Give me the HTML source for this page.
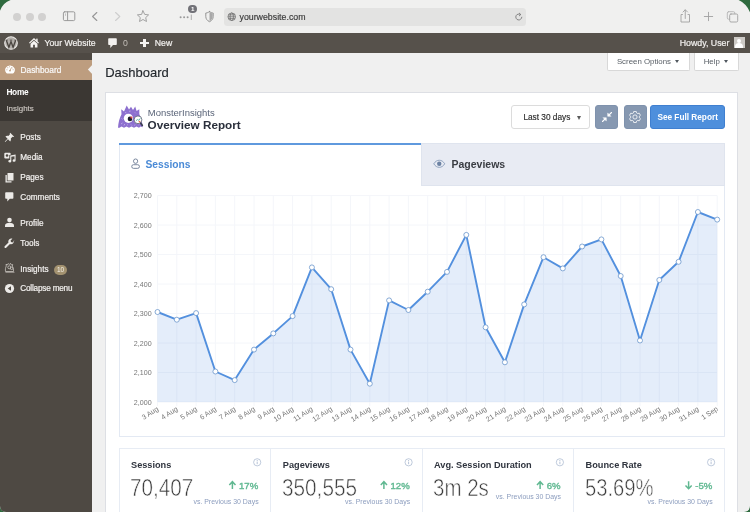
<!DOCTYPE html>
<html>
<head>
<meta charset="utf-8">
<title>Dashboard</title>
<style>
html,body{margin:0;padding:0;}
body{width:750px;height:512px;overflow:hidden;background:#2f6b3f;font-family:"Liberation Sans",sans-serif;position:relative;}
.abs{position:absolute;}
.t{position:absolute;white-space:nowrap;line-height:1;}
#adminbar .t{-webkit-text-stroke:0.2px #f2f0ee;}
#win{will-change:transform;position:absolute;left:0;top:0;width:750px;height:512px;overflow:hidden;border-radius:0 0 6px 6px;background:#f0f0f0;}
#chrome{position:absolute;left:0;top:0;width:750px;height:33px;background:#f0f0ef;}
#adminbar{position:absolute;left:0;top:33px;width:750px;height:20px;background:#56514b;}
#side{position:absolute;left:0;top:53px;width:92.4px;height:459px;background:#4e4943;}
#side .act{position:absolute;left:0;top:7px;width:92.4px;height:19.7px;background:#bd9d7f;}
#side .sub{position:absolute;left:0;top:26.7px;width:92.4px;height:41.2px;background:#3b3733;}
.m{position:absolute;left:20.3px;color:#f2f0ee;font-size:8.2px;line-height:10px;white-space:nowrap;-webkit-text-stroke:0.2px #f2f0ee;}
.ax{font-family:"Liberation Sans",sans-serif;font-size:7.1px;fill:#777;}
#card{position:absolute;left:105px;top:92px;width:633px;height:430px;background:#fff;border:1px solid #dddfe4;box-sizing:border-box;}
.btn{position:absolute;box-sizing:border-box;border-radius:2px;}
.stat{position:absolute;top:448px;height:70px;box-sizing:border-box;border:1px solid #e7ecf4;background:#fff;}
.sl{position:absolute;top:459.9px;font-size:9.2px;font-weight:700;color:#30353f;line-height:10px;white-space:nowrap;}
.sv{position:absolute;top:475.7px;font-size:23px;color:#3c3c3c;line-height:24px;white-space:nowrap;-webkit-text-stroke:0.55px #fff;transform-origin:0 0;}
.sp{position:absolute;top:479.9px;font-size:9.6px;font-weight:400;-webkit-text-stroke:0.4px #64ba94;color:#64ba94;line-height:11px;white-space:nowrap;text-align:right;}
.sd{position:absolute;top:498px;font-size:6.95px;color:#8c9dbe;line-height:8px;white-space:nowrap;text-align:right;}
</style>
</head>
<body>
<div id="win">

<!-- ===== browser chrome ===== -->
<div id="chrome">
  <div class="abs" style="left:13px;top:12.5px;width:8px;height:8px;border-radius:50%;background:#d2d1d0"></div>
  <div class="abs" style="left:25.5px;top:12.5px;width:8px;height:8px;border-radius:50%;background:#d2d1d0"></div>
  <div class="abs" style="left:38px;top:12.5px;width:8px;height:8px;border-radius:50%;background:#d2d1d0"></div>
  <svg class="abs" style="left:0;top:0" width="750" height="33" viewBox="0 0 750 33" fill="none" stroke="#8a8a8a" stroke-width="1" stroke-linecap="round" stroke-linejoin="round">
    <!-- sidebar icon -->
    <rect x="63.4" y="11.8" width="11.4" height="8.8" rx="1.3" stroke="#9a9a9a"/>
    <path d="M67.6 11.8V20.6" stroke="#9a9a9a"/><path d="M65.5 13.8v1.6" stroke="#b0b0b0" stroke-width="0.7"/>
    <!-- back -->
    <path d="M96.8 12.5L92.6 16.5L96.8 20.5" stroke="#969696" stroke-width="1.1"/>
    <!-- forward -->
    <path d="M115.6 12.5L119.8 16.5L115.6 20.5" stroke="#cdcdcd" stroke-width="1.1"/>
    <!-- star -->
    <path d="M143 10.8l1.7 3.6 3.9.5-2.9 2.7.8 3.9-3.5-2-3.5 2 .8-3.9-2.9-2.7 3.9-.5z" stroke="#9a9a9a" stroke-width="0.9"/>
    <!-- extension dots -->
    <circle cx="180.6" cy="17.3" r="1" fill="#9a9a9a" stroke="none"/>
    <circle cx="184.1" cy="17.3" r="1" fill="#9a9a9a" stroke="none"/>
    <circle cx="187.6" cy="17.3" r="1" fill="#9a9a9a" stroke="none"/>
    <path d="M191.3 15v4.6" stroke="#a5a5a5" stroke-width="0.9"/>
    <!-- shield -->
    <g transform="translate(1 0.3)"><path d="M208.5 11.3c1.2.9 2.4 1.3 3.7 1.4v3.6c0 2.300-1.500 4.100-3.700 5.100c-2.200-1-3.700-2.800-3.700-5.100v-3.600c1.300-.1 2.500-.5 3.700-1.400z" stroke-width="0.9"/>
    <path d="M208.500 11.800c1.100.8 2.200 1.200 3.200 1.300v3.200c0 2-1.300 3.600-3.200 4.500z" fill="#a8a8a8" stroke="none"/></g>
    <!-- share -->
    <path d="M682.500 14.500h-1.500v7.500h8.500v-7.500h-1.500M685.250 18.500v-8.500M683 12l2.250-2.250 2.250 2.250" stroke="#a0a0a0" stroke-width="0.9"/>
    <!-- plus -->
    <path d="M704.300 16.500h8.400M708.500 12.300v8.400" stroke="#a0a0a0" stroke-width="0.9"/>
    <!-- tabs -->
    <rect x="727.300" y="11.700" width="7.500" height="7.500" rx="1.300" stroke="#b5b5b5" stroke-width="0.9"/>
    <rect x="729.700" y="14" width="8" height="8" rx="1.300" fill="#f0f0ef" stroke="#a0a0a0" stroke-width="0.9"/>
  </svg>
  <!-- badge -->
  <div class="abs" style="left:188.4px;top:4.7px;width:8.6px;height:8.6px;border-radius:50%;background:#727278"></div>
  <div class="t" style="left:188.4px;top:6px;width:8.6px;text-align:center;font-size:6.2px;font-weight:700;color:#fff">1</div>
  <!-- url bar -->
  <div class="abs" style="left:223.5px;top:8px;width:302.5px;height:17.800px;border-radius:3.500px;background:#e3e3e2"></div>
  <svg class="abs" style="left:226.8px;top:11.8px" width="9.5" height="9.5" viewBox="0 0 9 9" fill="none" stroke="#6a6a6a" stroke-width="0.700">
    <circle cx="4.500" cy="4.500" r="3.600"/><ellipse cx="4.500" cy="4.500" rx="1.600" ry="3.600"/><path d="M1 4.500h7M1.500 2.700h6M1.500 6.300h6"/>
  </svg>
  <div class="t" style="left:239.500px;top:12px;font-size:8.800px;color:#383838;line-height:10px;-webkit-text-stroke:0.15px #383838">yourwebsite.com</div>
  <svg class="abs" style="left:513.800px;top:12.100px" width="10" height="10" viewBox="0 0 10 10" fill="none" stroke="#7a7a7a" stroke-width="0.900" stroke-linecap="round">
    <path d="M7.800 5.200a3 3 0 1 1-1.300-2.700"/><path d="M5.300 1.200l1.500 1.300-1.500 1.300" stroke-linejoin="round"/>
  </svg>
</div>

<!-- ===== WP admin bar ===== -->
<div id="adminbar">
  <svg class="abs" style="left:4px;top:2.6px" width="14" height="14" viewBox="0 0 14 14">
    <circle cx="7" cy="7" r="6.3" fill="#b3afaa" stroke="#ebe9e6" stroke-width="1.1"/>
    <path d="M2.300 4.300L4.900 11.300L7.000 5.600L9.100 11.300L11.700 4.300" fill="none" stroke="#4a4540" stroke-width="1.300" stroke-linejoin="miter"/>
    <path d="M1.500 4.100h2.400M5.800 4.100h2.400M10.300 4.100h2.000" stroke="#4a4540" stroke-width="0.700"/>
  </svg>
  <svg class="abs" style="left:29.300px;top:4.800px" width="10" height="10.200" viewBox="0 0 11 11" preserveAspectRatio="none" fill="#f6f4f2">
    <path d="M5.500 0.100L0 5L0.900 6L5.500 1.900L10.100 6L11 5Z"/><rect x="7.900" y="0.700" width="1.600" height="3"/>
    <path d="M5.500 2.900L1.700 6.300V10.300H4.500V7.400H6.500V10.300H9.300V6.300Z"/>
  </svg>
  <div class="t" style="left:44.500px;top:5px;font-size:8.700px;color:#f2f0ee;line-height:10px">Your Website</div>
  <svg class="abs" style="left:107.5px;top:5px" width="9" height="10.5" viewBox="0 0 9 10.5" fill="#f3f1ef">
    <path d="M1 0.200h7a.800.800 0 0 1 .8.800v5.300a.800.800 0 0 1-.8.800h-3l-2.700 3v-3h-1.300a.800.800 0 0 1-.8-.800v-5.300a.800.800 0 0 1 .8-.800z"/>
  </svg>
  <div class="t" style="left:123px;top:5px;font-size:8.700px;color:#c4bfb9;line-height:10px;-webkit-text-stroke:0">0</div>
  <div class="abs" style="left:140px;top:8.700px;width:9px;height:2.200px;background:#f5f3f1"></div>
  <div class="abs" style="left:143.400px;top:5.500px;width:2.200px;height:8.600px;background:#f5f3f1"></div>
  <div class="t" style="left:154.800px;top:5px;font-size:8.700px;color:#f2f0ee;line-height:10px">New</div>
  <div class="t" style="right:20.600px;top:5px;font-size:8.800px;color:#f2f0ee;line-height:10px">Howdy, User</div>
  <div class="abs" style="left:733.800px;top:4px;width:11.200px;height:11px;background:#cdcac6;overflow:hidden">
    <div class="abs" style="left:3.200px;top:1.500px;width:4px;height:4px;border-radius:50%;background:#fff"></div>
    <div class="abs" style="left:1.200px;top:6px;width:8px;height:7px;border-radius:4px 4px 0 0;background:#fff"></div>
  </div>
</div>

<!-- ===== sidebar ===== -->
<div id="side">
  <div class="act"></div>
  <svg class="abs" style="left:86px;top:10px" width="7" height="13" viewBox="0 0 7 13"><path d="M6.400 1.700L1.900 6.500L6.400 11.300Z" fill="#f0f0f0"/></svg>
  <div class="sub"></div>
  <!-- dashboard icon -->
  <svg class="abs" style="left:4.5px;top:12.2px" width="10" height="9" viewBox="0 0 10 9">
    <path d="M5 0.400a4.600 4.600 0 0 0-3.700 7.600c.2.300.5.400.8.400h5.800c.3 0 .6-.1.800-.4a4.600 4.600 0 0 0-3.700-7.600z" fill="#fff"/>
    <circle cx="5" cy="5.600" r="0.900" fill="#bd9d7f"/><path d="M5 5.600l1.600-3.300" stroke="#bd9d7f" stroke-width="0.800"/>
    <circle cx="1.900" cy="4.800" r="0.550" fill="#bd9d7f"/><circle cx="2.800" cy="2.700" r="0.550" fill="#bd9d7f"/><circle cx="4.600" cy="1.700" r="0.500" fill="#bd9d7f"/><circle cx="8.100" cy="4.800" r="0.550" fill="#bd9d7f"/><circle cx="7.600" cy="2.900" r="0.450" fill="#bd9d7f"/>
  </svg>
  <div class="m" style="left:20.5px;top:12.2px;font-size:8.35px;color:#fff">Dashboard</div>
  <div class="m" style="left:6.400px;top:34.100px;font-weight:700;font-size:8.300px;letter-spacing:-0.27px;color:#fff;-webkit-text-stroke:0">Home</div>
  <div class="m" style="left:6.400px;top:50.500px;font-size:7.950px;color:#cbc6c0;-webkit-text-stroke:0.15px #cbc6c0">Insights</div>

  <!-- Posts (pin) -->
  <svg class="abs" style="left:3.5px;top:78.8px" width="11" height="11" viewBox="0 0 11 11" fill="#eceae7">
    <path d="M6.200 0.800l4 4-.900.300-.800-.300-1.700 1.700c.300 1.100.100 2.100-.600 2.900l-2.200-2.200-2.800 2.800-.400-.400 2.800-2.800-2.200-2.200c.800-.700 1.800-.900 2.900-.600l1.700-1.700-.300-.800z"/>
  </svg>
  <div class="m" style="top:80.1px">Posts</div>
  <!-- Media -->
  <svg class="abs" style="left:3.5px;top:98.7px" width="12" height="11" viewBox="0 0 12 11" fill="#eceae7">
    <path d="M1.300 0.800h4.400a1 1 0 0 1 1 1v0.900l-1.400 0.300v3.600h-4a1 1 0 0 1-1-1v-3.800a1 1 0 0 1 1-1z"/><circle cx="3" cy="3.600" r="1.250" fill="#4e4943"/>
    <path d="M6.200 3.600l5.400-1v6a1.500 1.250 0 1 1-1.100-1.200v-3.200l-3.200 0.600v4.400a1.500 1.250 0 1 1-1.100-1.200z"/>
  </svg>
  <div class="m" style="top:100.3px">Media</div>
  <!-- Pages -->
  <svg class="abs" style="left:4.2px;top:118.6px" width="11" height="11" viewBox="0 0 11 11" fill="#eceae7">
    <path d="M3.500 1h6v7.500h-6z"/><path d="M1.500 3h1.300v6.200h4.700v1.300h-6z"/>
  </svg>
  <div class="m" style="top:120.3px">Pages</div>
  <!-- Comments -->
  <svg class="abs" style="left:5px;top:138.700px" width="8.600" height="10" viewBox="0 0 8.600 10" fill="#eceae7">
    <path d="M1 0.200h6.600a.800.800 0 0 1 .8.800v5a.800.800 0 0 1-.8.800h-2.800l-2.500 2.800v-2.800h-1.300a.800.800 0 0 1-.8-.8v-5a.800.800 0 0 1 .8-.8z"/>
  </svg>
  <div class="m" style="top:140px">Comments</div>
  <!-- Profile -->
  <svg class="abs" style="left:3.8px;top:164.3px" width="11" height="11" viewBox="0 0 11 11" fill="#eceae7">
    <circle cx="5.500" cy="3" r="2.300"/><path d="M1 10v-1.500c0-1.700 2-2.700 4.500-2.700s4.500 1 4.500 2.700v1.500z"/>
  </svg>
  <div class="m" style="top:165.9px">Profile</div>
  <!-- Tools -->
  <svg class="abs" style="left:4.1px;top:185.2px" width="11" height="11" viewBox="0 0 11 11" fill="#eceae7">
    <path d="M10.300 2.600l-1.800 1.800-1.500-.400-.400-1.500 1.800-1.800c-1.200-.400-2.500-.100-3.300.800-.800.800-1 2-.600 3l-3.800 3.800c-.400.400-.400 1.100 0 1.500s1.100.400 1.500 0l3.800-3.800c1 .4 2.200.200 3-.600.900-.900 1.200-2.200.800-3.300z"/>
  </svg>
  <div class="m" style="top:185.6px">Tools</div>
  <!-- Insights -->
  <svg class="abs" style="left:3.6px;top:208.3px" width="12" height="12" viewBox="0 0 12 12" fill="none" stroke="#d8d4cf" stroke-width="0.700">
    <path d="M1.500 10.500c-.300-2 0-4 .800-5.500l-.300-1.800 1.300.800 1-1.500 1 1 1.200-1.200.800 1.700 1.400-.500-.300 1.700c.900 1.500 1.300 3.300 1.100 5.300z"/>
    <circle cx="5.300" cy="6.300" r="1.500"/><circle cx="7.600" cy="7.300" r="1.300"/>
    <path d="M1.500 11.300h9" stroke-width="0.600"/>
  </svg>
  <div class="m" style="top:211.9px">Insights</div>
  <div class="abs" style="left:54.1px;top:211.700px;width:13px;height:10px;border-radius:5px;background:#a39270"></div>
  <div class="t" style="left:54.1px;top:213.600px;width:13px;text-align:center;font-size:6.500px;color:#f6f2ea">10</div>
  <!-- Collapse -->
  <svg class="abs" style="left:3.6px;top:229.8px" width="11" height="11" viewBox="0 0 11 11">
    <circle cx="5.500" cy="5.500" r="4.600" fill="#eceae7"/><path d="M7 3.200v4.600l-3.300-2.300z" fill="#4e4943"/>
  </svg>
  <div class="m" style="top:231.1px;letter-spacing:-0.2px">Collapse menu</div>
</div>

<!-- ===== content ===== -->
<div class="t" style="left:105.2px;top:66px;font-size:13px;color:#23282d;line-height:14px;-webkit-text-stroke:0.15px #23282d">Dashboard</div>

<div class="btn" style="left:607px;top:53px;width:83px;height:17.500px;background:#fff;border:1px solid #d8d8d8;border-top:none;border-radius:0 0 2px 2px"></div>
<div class="t" style="left:616.900px;top:58.100px;font-size:7.850px;color:#5a6067;line-height:8px">Screen Options</div>
<div class="abs" style="left:675.2px;top:59.900px;width:0;height:0;border-left:2.400px solid transparent;border-right:2.400px solid transparent;border-top:3.500px solid #50575e"></div>
<div class="btn" style="left:693.500px;top:53px;width:45px;height:17.500px;background:#fff;border:1px solid #d8d8d8;border-top:none;border-radius:0 0 2px 2px"></div>
<div class="t" style="left:703.700px;top:58.100px;font-size:7.850px;color:#5a6067;line-height:8px">Help</div>
<div class="abs" style="left:723.8px;top:59.900px;width:0;height:0;border-left:2.400px solid transparent;border-right:2.400px solid transparent;border-top:3.500px solid #50575e"></div>

<div id="card"></div>

<!-- logo -->
<svg class="abs" style="left:117px;top:104px" width="27" height="27" viewBox="0 0 27 27">
  <path d="M1 23.800C1.200 19 2.600 14 4.500 10.300L4.200 5.300L7 7.400L9.700 1.500L12 5.600L14 2.800L16 6L18.200 2.600L19.600 7L22.300 5.300L22.300 10C24.200 14 25.600 19 25.600 23.200L23.600 22.400L22 23.800L19.500 22.600L17 23.800L14.500 22.600L12 23.800L9.500 22.600L7 23.800L4.500 22.600L2.500 23.800Z" fill="#8d70cf"/>
  <path d="M4 20l1.500-1M7 21.500l.8-1.500M4.500 14.500l1 .800M14 20.500l1 1M8.500 8l.5 1.200M13 6.500l-.3 1.500M17.500 21.500l.5-1M18 8.500l.8.800M21.500 21l.8-.6M10 20.500l.8.500" stroke="#bfaee8" stroke-width="0.900" fill="none"/>
  <circle cx="11.400" cy="14.300" r="4.600" fill="#fff"/>
  <circle cx="13" cy="14.900" r="2.300" fill="#1d1d2b"/>
  <circle cx="14.400" cy="13.500" r="1.100" fill="#e24b4b"/>
  <circle cx="21" cy="15.800" r="3.900" fill="#fff" stroke="#6a7080" stroke-width="0.900"/>
  <path d="M23.800 19.200l1.500 2.200" stroke="#3c4050" stroke-width="1.700" stroke-linecap="round"/>
  <path d="M18.900 16.800l1.500-1.300 1.400.8 1.500-2" stroke="#58b6a0" stroke-width="0.900" fill="none"/>
  <circle cx="22.500" cy="17.600" r="0.900" fill="#e86a4a"/>
</svg>
<div class="t" style="left:147.800px;top:107.400px;font-size:9.480px;color:#5a6478;line-height:11px">MonsterInsights</div>
<div class="t" style="left:147.600px;top:118.300px;font-size:11.720px;font-weight:700;color:#2a2f3b;line-height:13px">Overview Report</div>

<!-- date dropdown -->
<div class="btn" style="left:511.3px;top:104.7px;width:79px;height:24.500px;background:#fff;border:1px solid #dcdcdc;border-radius:3px"></div>
<div class="t" style="left:523.400px;top:112.700px;font-size:8.290px;color:#2c2c2c;line-height:9px;-webkit-text-stroke:0.15px #2c2c2c">Last 30 days</div>
<div class="abs" style="left:576.900px;top:115.600px;width:0;height:0;border-left:2.800px solid transparent;border-right:2.800px solid transparent;border-top:4px solid #5a5a5a"></div>
<!-- collapse btn -->
<div class="btn" style="left:595px;top:105px;width:23px;height:23.800px;background:#8698b1;border:1px solid #7f92ad;border-radius:3px"></div>
<svg class="abs" style="left:600.500px;top:111px" width="12" height="12" viewBox="0 0 12 12" fill="#fff" stroke="#fff" stroke-width="1.100" stroke-linecap="round" stroke-linejoin="round">
  <path d="M10.500 1.500L7.500 4.500" fill="none"/><path d="M6.700 2.300v3h3z" stroke-width="0.500"/>
  <path d="M1.500 10.500L4.500 7.500" fill="none"/><path d="M5.300 9.700v-3h-3z" stroke-width="0.500"/>
</svg>
<!-- gear btn -->
<div class="btn" style="left:624px;top:105px;width:23px;height:23.800px;background:#8698b1;border:1px solid #7f92ad;border-radius:3px"></div>
<svg class="abs" style="left:629.300px;top:110.900px" width="12" height="12" viewBox="0 0 12 12" fill="none" stroke="#fff" stroke-width="0.800" stroke-linejoin="round">
  <path d="M4.50 1.87 L4.72 0.45 L7.28 0.45 L7.50 1.87 L8.83 2.63 L10.17 2.11 L11.45 4.33 L10.33 5.24 L10.33 6.76 L11.45 7.67 L10.17 9.89 L8.83 9.37 L7.50 10.13 L7.28 11.55 L4.72 11.55 L4.50 10.13 L3.17 9.37 L1.83 9.89 L0.55 7.67 L1.67 6.76 L1.67 5.24 L0.55 4.33 L1.83 2.11 L3.17 2.63Z"/>
  <circle cx="6" cy="6" r="2.100"/>
</svg>
<!-- see full report -->
<div class="btn" style="left:650.300px;top:105px;width:74.700px;height:23.800px;background:#4e8fdc;border:1px solid #3f7fd0;border-radius:3px"></div>
<div class="t" style="left:650.300px;top:113px;width:74.700px;text-align:center;font-size:8.260px;font-weight:700;color:#fff;line-height:9px">See Full Report</div>

<!-- tabs + chart box -->
<div class="abs" style="left:118.500px;top:143px;width:606.500px;height:294px;box-sizing:border-box;border:1px solid #e3e9f3;background:#fff"></div>
<div class="abs" style="left:118.500px;top:142.700px;width:302.500px;height:2px;background:#5f99de"></div>
<div class="abs" style="left:421px;top:143px;width:304px;height:42.800px;box-sizing:border-box;background:#e8ebf3;border:1px solid #dfe4ee"></div>
<svg class="abs" style="left:130.700px;top:157.800px" width="9.200" height="11.500" viewBox="0 0 10 12" preserveAspectRatio="none" fill="none" stroke="#66758f" stroke-width="0.900">
  <circle cx="5" cy="3.300" r="2.300"/><rect x="0.800" y="7" width="8.400" height="3.800" rx="1.900"/>
</svg>
<div class="t" style="left:145.500px;top:158.600px;font-size:10.250px;font-weight:700;color:#4a8ad6;line-height:12px">Sessions</div>
<svg class="abs" style="left:433px;top:159.300px" width="12.500" height="9.600" viewBox="0 0 13 10" fill="none" stroke="#8398b6" stroke-width="0.900">
  <path d="M0.800 5c1.500-2.500 3.500-3.700 5.700-3.700s4.200 1.200 5.700 3.700c-1.500 2.500-3.500 3.700-5.700 3.700s-4.200-1.200-5.700-3.700z"/><circle cx="6.500" cy="5" r="2.300" fill="#6c82a3" stroke="none"/>
</svg>
<div class="t" style="left:451.500px;top:157.900px;font-size:10.500px;font-weight:700;color:#393c42;line-height:12px">Pageviews</div>

<svg class="abs" style="left:0;top:0" width="750" height="512" viewBox="0 0 750 512">
<path d="M157.5 195.60H717.2M157.5 225.09H717.2M157.5 254.57H717.2M157.5 284.06H717.2M157.5 313.54H717.2M157.5 343.03H717.2M157.5 372.51H717.2M157.5 402.00H717.2M157.50 195.6V406.0M176.80 195.6V406.0M196.10 195.6V406.0M215.40 195.6V406.0M234.70 195.6V406.0M254.00 195.6V406.0M273.30 195.6V406.0M292.60 195.6V406.0M311.90 195.6V406.0M331.20 195.6V406.0M350.50 195.6V406.0M369.80 195.6V406.0M389.10 195.6V406.0M408.40 195.6V406.0M427.70 195.6V406.0M447.00 195.6V406.0M466.30 195.6V406.0M485.60 195.6V406.0M504.90 195.6V406.0M524.20 195.6V406.0M543.50 195.6V406.0M562.80 195.6V406.0M582.10 195.6V406.0M601.40 195.6V406.0M620.70 195.6V406.0M640.00 195.6V406.0M659.30 195.6V406.0M678.60 195.6V406.0M697.90 195.6V406.0M717.20 195.6V406.0" stroke="#f4f6fa" stroke-width="1" fill="none"/>
<polygon points="157.5,402.0 157.5,312.0 176.8,319.7 196.1,313.1 215.4,371.5 234.7,380.1 254.0,349.6 273.3,333.4 292.6,316.1 311.9,267.4 331.2,289.2 350.5,349.6 369.8,383.7 389.1,300.4 408.4,310.0 427.7,291.7 447.0,271.9 466.3,234.9 485.6,327.3 504.9,362.3 524.2,304.4 543.5,257.2 562.8,268.4 582.1,246.5 601.4,239.4 620.7,276.0 640.0,340.5 659.3,280.0 678.6,261.8 697.9,212.0 717.2,219.6 717.2,402.0" fill="#4a89dc" fill-opacity="0.15"/>
<polyline points="157.5,312.0 176.8,319.7 196.1,313.1 215.4,371.5 234.7,380.1 254.0,349.6 273.3,333.4 292.6,316.1 311.9,267.4 331.2,289.2 350.5,349.6 369.8,383.7 389.1,300.4 408.4,310.0 427.7,291.7 447.0,271.9 466.3,234.9 485.6,327.3 504.9,362.3 524.2,304.4 543.5,257.2 562.8,268.4 582.1,246.5 601.4,239.4 620.7,276.0 640.0,340.5 659.3,280.0 678.6,261.8 697.9,212.0 717.2,219.6" fill="none" stroke="#5390de" stroke-width="1.9" stroke-linejoin="round"/>
<circle cx="157.5" cy="312.0" r="2.5" fill="#fff" stroke="#6a95cc" stroke-width="0.8"/>
<circle cx="176.8" cy="319.7" r="2.5" fill="#fff" stroke="#6a95cc" stroke-width="0.8"/>
<circle cx="196.1" cy="313.1" r="2.5" fill="#fff" stroke="#6a95cc" stroke-width="0.8"/>
<circle cx="215.4" cy="371.5" r="2.5" fill="#fff" stroke="#6a95cc" stroke-width="0.8"/>
<circle cx="234.7" cy="380.1" r="2.5" fill="#fff" stroke="#6a95cc" stroke-width="0.8"/>
<circle cx="254.0" cy="349.6" r="2.5" fill="#fff" stroke="#6a95cc" stroke-width="0.8"/>
<circle cx="273.3" cy="333.4" r="2.5" fill="#fff" stroke="#6a95cc" stroke-width="0.8"/>
<circle cx="292.6" cy="316.1" r="2.5" fill="#fff" stroke="#6a95cc" stroke-width="0.8"/>
<circle cx="311.9" cy="267.4" r="2.5" fill="#fff" stroke="#6a95cc" stroke-width="0.8"/>
<circle cx="331.2" cy="289.2" r="2.5" fill="#fff" stroke="#6a95cc" stroke-width="0.8"/>
<circle cx="350.5" cy="349.6" r="2.5" fill="#fff" stroke="#6a95cc" stroke-width="0.8"/>
<circle cx="369.8" cy="383.7" r="2.5" fill="#fff" stroke="#6a95cc" stroke-width="0.8"/>
<circle cx="389.1" cy="300.4" r="2.5" fill="#fff" stroke="#6a95cc" stroke-width="0.8"/>
<circle cx="408.4" cy="310.0" r="2.5" fill="#fff" stroke="#6a95cc" stroke-width="0.8"/>
<circle cx="427.7" cy="291.7" r="2.5" fill="#fff" stroke="#6a95cc" stroke-width="0.8"/>
<circle cx="447.0" cy="271.9" r="2.5" fill="#fff" stroke="#6a95cc" stroke-width="0.8"/>
<circle cx="466.3" cy="234.9" r="2.5" fill="#fff" stroke="#6a95cc" stroke-width="0.8"/>
<circle cx="485.6" cy="327.3" r="2.5" fill="#fff" stroke="#6a95cc" stroke-width="0.8"/>
<circle cx="504.9" cy="362.3" r="2.5" fill="#fff" stroke="#6a95cc" stroke-width="0.8"/>
<circle cx="524.2" cy="304.4" r="2.5" fill="#fff" stroke="#6a95cc" stroke-width="0.8"/>
<circle cx="543.5" cy="257.2" r="2.5" fill="#fff" stroke="#6a95cc" stroke-width="0.8"/>
<circle cx="562.8" cy="268.4" r="2.5" fill="#fff" stroke="#6a95cc" stroke-width="0.8"/>
<circle cx="582.1" cy="246.5" r="2.5" fill="#fff" stroke="#6a95cc" stroke-width="0.8"/>
<circle cx="601.4" cy="239.4" r="2.5" fill="#fff" stroke="#6a95cc" stroke-width="0.8"/>
<circle cx="620.7" cy="276.0" r="2.5" fill="#fff" stroke="#6a95cc" stroke-width="0.8"/>
<circle cx="640.0" cy="340.5" r="2.5" fill="#fff" stroke="#6a95cc" stroke-width="0.8"/>
<circle cx="659.3" cy="280.0" r="2.5" fill="#fff" stroke="#6a95cc" stroke-width="0.8"/>
<circle cx="678.6" cy="261.8" r="2.5" fill="#fff" stroke="#6a95cc" stroke-width="0.8"/>
<circle cx="697.9" cy="212.0" r="2.5" fill="#fff" stroke="#6a95cc" stroke-width="0.8"/>
<circle cx="717.2" cy="219.6" r="2.5" fill="#fff" stroke="#6a95cc" stroke-width="0.8"/>
<text x="151.6" y="198.2" text-anchor="end" class="ax">2,700</text>
<text x="151.6" y="227.7" text-anchor="end" class="ax">2,600</text>
<text x="151.6" y="257.2" text-anchor="end" class="ax">2,500</text>
<text x="151.6" y="286.7" text-anchor="end" class="ax">2,400</text>
<text x="151.6" y="316.1" text-anchor="end" class="ax">2,300</text>
<text x="151.6" y="345.6" text-anchor="end" class="ax">2,200</text>
<text x="151.6" y="375.1" text-anchor="end" class="ax">2,100</text>
<text x="151.6" y="404.6" text-anchor="end" class="ax">2,000</text>
<text x="159.0" y="410" text-anchor="end" class="ax" transform="rotate(-33 159.0 410)">3 Aug</text>
<text x="178.3" y="410" text-anchor="end" class="ax" transform="rotate(-33 178.3 410)">4 Aug</text>
<text x="197.6" y="410" text-anchor="end" class="ax" transform="rotate(-33 197.6 410)">5 Aug</text>
<text x="216.9" y="410" text-anchor="end" class="ax" transform="rotate(-33 216.9 410)">6 Aug</text>
<text x="236.2" y="410" text-anchor="end" class="ax" transform="rotate(-33 236.2 410)">7 Aug</text>
<text x="255.5" y="410" text-anchor="end" class="ax" transform="rotate(-33 255.5 410)">8 Aug</text>
<text x="274.8" y="410" text-anchor="end" class="ax" transform="rotate(-33 274.8 410)">9 Aug</text>
<text x="294.1" y="410" text-anchor="end" class="ax" transform="rotate(-33 294.1 410)">10 Aug</text>
<text x="313.4" y="410" text-anchor="end" class="ax" transform="rotate(-33 313.4 410)">11 Aug</text>
<text x="332.7" y="410" text-anchor="end" class="ax" transform="rotate(-33 332.7 410)">12 Aug</text>
<text x="352.0" y="410" text-anchor="end" class="ax" transform="rotate(-33 352.0 410)">13 Aug</text>
<text x="371.3" y="410" text-anchor="end" class="ax" transform="rotate(-33 371.3 410)">14 Aug</text>
<text x="390.6" y="410" text-anchor="end" class="ax" transform="rotate(-33 390.6 410)">15 Aug</text>
<text x="409.9" y="410" text-anchor="end" class="ax" transform="rotate(-33 409.9 410)">16 Aug</text>
<text x="429.2" y="410" text-anchor="end" class="ax" transform="rotate(-33 429.2 410)">17 Aug</text>
<text x="448.5" y="410" text-anchor="end" class="ax" transform="rotate(-33 448.5 410)">18 Aug</text>
<text x="467.8" y="410" text-anchor="end" class="ax" transform="rotate(-33 467.8 410)">19 Aug</text>
<text x="487.1" y="410" text-anchor="end" class="ax" transform="rotate(-33 487.1 410)">20 Aug</text>
<text x="506.4" y="410" text-anchor="end" class="ax" transform="rotate(-33 506.4 410)">21 Aug</text>
<text x="525.7" y="410" text-anchor="end" class="ax" transform="rotate(-33 525.7 410)">22 Aug</text>
<text x="545.0" y="410" text-anchor="end" class="ax" transform="rotate(-33 545.0 410)">23 Aug</text>
<text x="564.3" y="410" text-anchor="end" class="ax" transform="rotate(-33 564.3 410)">24 Aug</text>
<text x="583.6" y="410" text-anchor="end" class="ax" transform="rotate(-33 583.6 410)">25 Aug</text>
<text x="602.9" y="410" text-anchor="end" class="ax" transform="rotate(-33 602.9 410)">26 Aug</text>
<text x="622.2" y="410" text-anchor="end" class="ax" transform="rotate(-33 622.2 410)">27 Aug</text>
<text x="641.5" y="410" text-anchor="end" class="ax" transform="rotate(-33 641.5 410)">28 Aug</text>
<text x="660.8" y="410" text-anchor="end" class="ax" transform="rotate(-33 660.8 410)">29 Aug</text>
<text x="680.1" y="410" text-anchor="end" class="ax" transform="rotate(-33 680.1 410)">30 Aug</text>
<text x="699.4" y="410" text-anchor="end" class="ax" transform="rotate(-33 699.4 410)">31 Aug</text>
<text x="718.7" y="410" text-anchor="end" class="ax" transform="rotate(-33 718.7 410)">1 Sep</text>
</svg>

<!-- stats -->
<div class="stat" style="left:118.500px;width:606.500px"></div>
<div class="abs" style="left:270px;top:448px;width:1px;height:70px;background:#e7ecf4"></div>
<div class="abs" style="left:422px;top:448px;width:1px;height:70px;background:#e7ecf4"></div>
<div class="abs" style="left:573.2px;top:448px;width:1px;height:70px;background:#e7ecf4"></div>

<div class="sl" style="left:131.0px">Sessions</div>
<div class="sv" style="left:130.1px;transform:scaleX(0.898)">70,407</div>
<div class="sp" style="right:491.8px">17%</div>
<div class="sd" style="right:491.4px;top:497.8px">vs. Previous 30 Days</div>
<svg class="abs" style="left:0;top:0" width="750" height="512"><path d="M232.4 489.1V482.0M229.3 484.9L232.4 481.7L235.5 484.9" fill="none" stroke="#60b891" stroke-width="1.5"/><circle cx="257.2" cy="462.3" r="3.6" fill="none" stroke="#a5b4cd" stroke-width="0.7"/><path d="M257.2 461.6v2.6" stroke="#a5b4cd" stroke-width="0.8"/><circle cx="257.2" cy="460.4" r="0.5" fill="#a5b4cd"/></svg>
<div class="sl" style="left:282.8px">Pageviews</div>
<div class="sv" style="left:281.9px;transform:scaleX(0.902)">350,555</div>
<div class="sp" style="right:340.3px">12%</div>
<div class="sd" style="right:339.9px;top:497.8px">vs. Previous 30 Days</div>
<svg class="abs" style="left:0;top:0" width="750" height="512"><path d="M383.9 489.1V482.0M380.8 484.9L383.9 481.7L387.0 484.9" fill="none" stroke="#60b891" stroke-width="1.5"/><circle cx="408.6" cy="462.3" r="3.6" fill="none" stroke="#a5b4cd" stroke-width="0.7"/><path d="M408.6 461.6v2.6" stroke="#a5b4cd" stroke-width="0.8"/><circle cx="408.6" cy="460.4" r="0.5" fill="#a5b4cd"/></svg>
<div class="sl" style="left:434.0px">Avg. Session Duration</div>
<div class="sv" style="left:433.1px;transform:scaleX(0.891)">3m 2s</div>
<div class="sp" style="right:189.4px">6%</div>
<div class="sd" style="right:189.0px;top:492.8px">vs. Previous 30 Days</div>
<svg class="abs" style="left:0;top:0" width="750" height="512"><path d="M540.1 489.1V482.0M537.0 484.9L540.1 481.7L543.2 484.9" fill="none" stroke="#60b891" stroke-width="1.5"/><circle cx="559.9" cy="462.3" r="3.6" fill="none" stroke="#a5b4cd" stroke-width="0.7"/><path d="M559.9 461.6v2.6" stroke="#a5b4cd" stroke-width="0.8"/><circle cx="559.9" cy="460.4" r="0.5" fill="#a5b4cd"/></svg>
<div class="sl" style="left:585.6px">Bounce Rate</div>
<div class="sv" style="left:584.7px;transform:scaleX(0.879)">53.69%</div>
<div class="sp" style="right:37.7px">-5%</div>
<div class="sd" style="right:37.3px;top:497.8px">vs. Previous 30 Days</div>
<svg class="abs" style="left:0;top:0" width="750" height="512"><path d="M688.6 481.3V488.4M685.5 485.5L688.6 488.7L691.7 485.5" fill="none" stroke="#60b891" stroke-width="1.5"/><circle cx="711.1" cy="462.3" r="3.6" fill="none" stroke="#a5b4cd" stroke-width="0.7"/><path d="M711.1 461.6v2.6" stroke="#a5b4cd" stroke-width="0.8"/><circle cx="711.1" cy="460.4" r="0.5" fill="#a5b4cd"/></svg>

<svg class="abs" style="left:0;top:0" width="750" height="14" viewBox="0 0 750 14"><path d="M0 0H10.6Q2.8 2.800 0 10.800Z" fill="#2f6b3f"/><path d="M750 0H738.600Q746.400 3.600 750 12.200Z" fill="#2f6b3f"/></svg>
</div>
</body>
</html>
